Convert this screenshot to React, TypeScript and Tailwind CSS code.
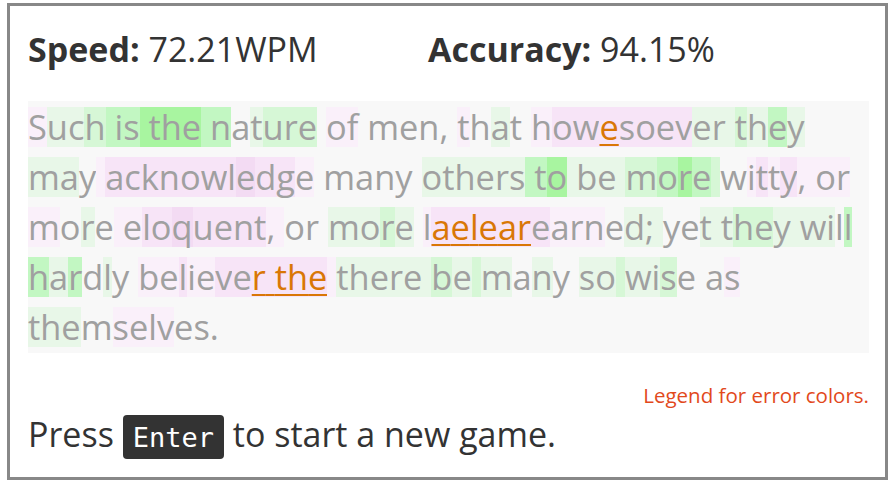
import clsx from "clsx";

// per-character timing colours: p/P/q = slow (pink), g/G/H/K = fast (green), E = error
const BG: Record<string, string> = {
  p: "bg-[#faf0fa]",
  P: "bg-[#f7e4f7]",
  q: "bg-[#f3dbf3]",
  g: "bg-[#e8f7e8]",
  G: "bg-[#d6f7d6]",
  H: "bg-[#c2f7c2]",
  K: "bg-[#a8f5a0]",
  E: "bg-[#f7e4f7]",
};

const lines: [string, string][] = [
  ["Such is the nature of men, that howesoever they", "pggGHHHKKKKHH.gGGG.pp......p.g..pPPEPPPPgggGgHg"],
  ["may acknowledge many others to be more witty, or", "gg.pPPPPPPPqPPp......ggggggHHKggggGHKHG.pPpPpppp"],
  ["more eloquent, or more laelearearned; yet they will", "p.g.ppPPqPPPPpp...ggGg.pEEEEEEPppp.ggg..gggGGgggg.H"],
  ["hardly believer the there be many so wise as", "HgH.g..ppPppPPEEEEEpggggggGgGg.g..ggGggG...p"],
  ["themselves.", "ggg.pppp..."],
];

export default function App() {
  return (
    <div className="font-['Open_Sans',sans-serif] text-[#333]">
      <div className="mt-[3px] ml-[7px] w-[881px] h-[477px] border-[3px] border-[#888] pl-[18px] pr-[16px]">
        <div className="mt-[20px] flex text-[34px] leading-[46px]">
          <div className="w-[400px]">
            <span className="font-bold">Speed:</span> 72.21WPM
          </div>
          <div>
            <span className="font-bold">Accuracy:</span> 94.15%
          </div>
        </div>

        <div className="mt-[29px] bg-[#f8f8f8] py-px text-[34.4px] text-[#a0a0a0]">
          {lines.map(([text, codes], i) => (
            <div key={i} className="h-[50px] flex items-center whitespace-pre">
              {text.split("").map((ch, j) => {
                const c = codes[j];
                return (
                  <span
                    key={j}
                    className={clsx(
                      "inline-block h-10 leading-10",
                      BG[c],
                      c === "E" && "text-[#d97706] underline decoration-2 underline-offset-[4px]"
                    )}
                  >
                    {ch}
                  </span>
                );
              })}
            </div>
          ))}
        </div>

        <div className="mt-[28px] text-right text-[20.5px] leading-[28px] text-[#e2491c]">
          Legend for error colors.
        </div>

        <div className="mt-[2px] text-[34px] leading-[46px]">
          Press{" "}
          <kbd className="font-['DejaVu_Sans_Mono',monospace] text-[27px] leading-none bg-[#333] text-white rounded-[4px] px-[10px] pt-[7px] pb-[6px]">
            Enter
          </kbd>{" "}
          to start a new game.
        </div>
      </div>
    </div>
  );
}
